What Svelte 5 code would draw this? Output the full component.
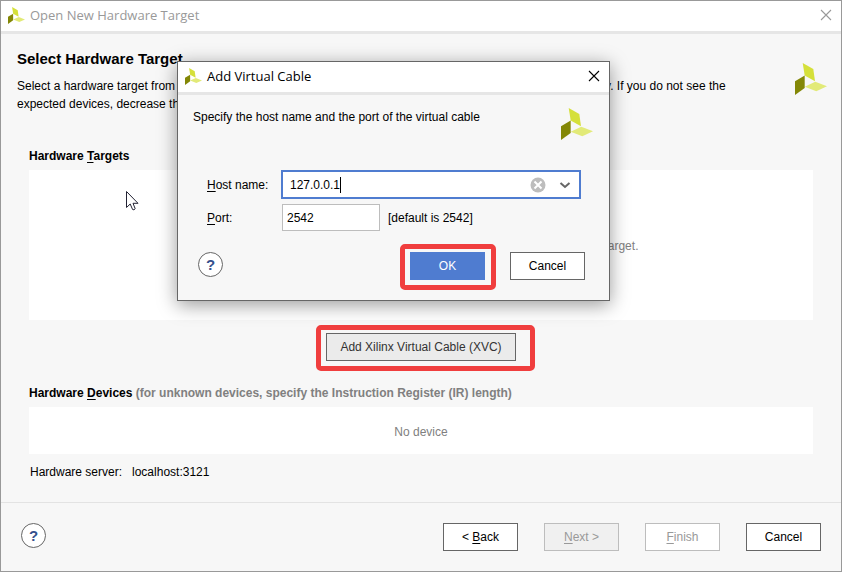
<script lang="ts">
  let hostName = $state('127.0.0.1');
  let port = $state('2542');
  let dialogOpen = $state(true);

  function closeDialog() {
    dialogOpen = false;
  }
</script>

{#snippet logo(size: number)}
  <svg class="logo" width={size} height={size} viewBox="0 0 32 32" aria-hidden="true">
    <path d="M7.700 0 18.300 6 20 18.300 9.700 12.500Z" fill="#d5e03a" />
    <path d="M0 18.300 9.700 12.500V25L0 32Z" fill="#838706" />
    <path d="M9.700 23.700 20.300 18.700 32 23.300 21.300 28.300Z" fill="#e2ea78" />
  </svg>
{/snippet}

{#snippet cross()}
  <svg width="12" height="12" viewBox="0 0 12 12" aria-hidden="true">
    <path d="M1 1 11 11M11 1 1 11" stroke="currentColor" stroke-width="1.1" fill="none" />
  </svg>
{/snippet}

<div class="window">
  <header class="titlebar inactive">
    {@render logo(17)}
    <span class="caption">Open New Hardware Target</span>
    <button class="close" aria-label="Close window">{@render cross()}</button>
  </header>

  <main class="page">
    <div class="intro">
      <div class="intro-text">
        <h1>Select Hardware Target</h1>
        <p>
          Select a hardware target from the list of available targets, then pick the appropriate JTAG clock (TCK)
          frequency. If you do not see the expected devices, decrease the frequency or select a different target.
        </p>
      </div>
      {@render logo(32)}
    </div>

    <section class="devices">
      <h2>Hardware <u>T</u>argets</h2>
      <div class="panel targets">
        No hardware target was connected. Add a virtual cable to open a hardware target.
      </div>
      <button class="btn wide marked" onclick={() => (dialogOpen = true)}>Add Xilinx Virtual Cable (XVC)</button>

      <h2>
        Hardware <u>D</u>evices
        <span class="note">(for unknown devices, specify the Instruction Register (IR) length)</span>
      </h2>
      <div class="panel">No device</div>
      <p class="server"><span>Hardware server:</span><span>localhost:3121</span></p>
    </section>
  </main>

  <footer class="footer">
    <button class="help" aria-label="Help">?</button>
    <div class="nav">
      <button class="btn">&lt; <u>B</u>ack</button>
      <button class="btn shaded" disabled><u>N</u>ext &gt;</button>
      <button class="btn" disabled><u>F</u>inish</button>
      <button class="btn">Cancel</button>
    </div>
  </footer>

  {#if dialogOpen}
    <div class="dialog" role="dialog" aria-labelledby="dialog-title">
      <header class="titlebar">
        {@render logo(17)}
        <span class="caption" id="dialog-title">Add Virtual Cable</span>
        <button class="close" aria-label="Close dialog" onclick={closeDialog}>{@render cross()}</button>
      </header>
      <div class="dialog-intro">
        <p>Specify the host name and the port of the virtual cable</p>
        {@render logo(32)}
      </div>
      <div class="form">
        <label for="host"><u>H</u>ost name:</label>
        <div class="combo">
          <input id="host" bind:value={hostName} />
          <span class="caret"></span>
          <button class="icon clear" aria-label="Clear" onclick={() => (hostName = '')}>
            <svg width="16" height="16" viewBox="0 0 16 16" aria-hidden="true">
              <circle cx="8" cy="8" r="7.500" fill="#bdbdbd" />
              <path d="M4.500 4.500 11.500 11.500M11.500 4.500 4.500 11.500" stroke="#fff" stroke-width="2" />
            </svg>
          </button>
          <button class="icon" aria-label="Show hosts">
            <svg width="12" height="12" viewBox="0 0 12 12" aria-hidden="true">
              <path d="M1.500 4 6 8 10.500 4" fill="none" stroke="#666" stroke-width="2" />
            </svg>
          </button>
        </div>
        <label for="port"><u>P</u>ort:</label>
        <div class="port-row">
          <input id="port" bind:value={port} />
          <span>[default is 2542]</span>
        </div>
      </div>
      <div class="dialog-actions">
        <button class="help" aria-label="Dialog help">?</button>
        <div class="choices">
          <button class="btn primary marked" onclick={closeDialog}>OK</button>
          <button class="btn" onclick={closeDialog}>Cancel</button>
        </div>
      </div>
    </div>
  {/if}

  <svg class="pointer" width="13" height="21" viewBox="0 0 13 21" aria-hidden="true">
    <path
      d="M.5.500V16.500L4.200 13 6.600 18.500Q8 19.500 9.200 17.700L7 12.300H12Z"
      fill="#fff"
      stroke="#223"
    />
  </svg>
</div>

<style>
  :global(body) {
    margin: 0;
  }

  .window {
    position: relative;
    box-sizing: border-box;
    display: flex;
    flex-direction: column;
    min-height: 100vh;
    border: 1px solid #999;
    background: #f7f7f7;
    color: #000;
    font: 12px/18px 'Liberation Sans', Arial, sans-serif;
  }

  h1,
  h2,
  p {
    margin: 0;
  }

  button,
  input {
    font: inherit;
    color: inherit;
  }

  u {
    text-underline-offset: 2px;
  }

  .logo {
    flex: none;
  }

  .titlebar {
    display: flex;
    align-items: center;
    height: 30px;
    padding: 0 8px 0 7px;
    border-bottom: 3px solid #e6e6e6;
    background: #fff;
    font: 13px/20px 'Open Sans', 'Noto Sans', sans-serif;
  }

  .titlebar .logo {
    margin-bottom: 2px;
  }

  .caption {
    flex: 1;
    margin: 0 0 2px 5px;
  }

  .inactive {
    color: #999;
  }

  .close {
    display: flex;
    padding: 0 1px 2px;
    border: 0;
    background: none;
  }

  .page {
    flex: 1;
  }

  .intro {
    display: flex;
    justify-content: space-between;
    padding: 16px 14px 0 16px;
  }

  .intro-text {
    max-width: 730px;
  }

  .intro .logo {
    margin-top: 13px;
  }

  h1 {
    margin-bottom: 9px;
    font-size: 15px;
    line-height: 18px;
  }

  .devices {
    padding: 34px 28px 0;
  }

  h2 {
    margin-bottom: 5px;
    font-size: 12px;
    line-height: 18px;
  }

  .note {
    color: #808080;
  }

  .panel {
    display: flex;
    align-items: center;
    justify-content: center;
    box-sizing: border-box;
    min-height: 47px;
    padding-top: 2px;
    background: #fff;
    color: #808080;
  }

  .targets {
    min-height: 150px;
  }

  .btn {
    position: relative;
    box-sizing: border-box;
    min-width: 75px;
    height: 28px;
    padding: 0 8px;
    border: 1px solid #666;
    background: #fff;
  }

  .btn:disabled {
    border-color: #bdbdbd;
    color: #999;
  }

  .btn.shaded {
    background: #f0f0f0;
  }

  .btn.wide {
    display: block;
    margin: 13px auto 23px;
    padding: 0 13px;
    background: #ebebeb;
    color: #333;
  }

  .btn.primary {
    border-color: #4f7cd0;
    background: #4f7cd0;
    color: #fff;
  }

  /* highlight frame around the buttons to press */
  .marked::after {
    content: '';
    position: absolute;
    inset: -9px -12px -11px -11px;
    border: 5px solid #f03e3e;
    border-radius: 5px;
    pointer-events: none;
  }

  .wide.marked::after {
    right: -20px;
  }

  .server {
    display: flex;
    gap: 10px;
    padding: 9px 1px;
  }

  .footer {
    display: flex;
    justify-content: space-between;
    padding: 20px;
    border-top: 1px solid #e3e3e3;
  }

  .help {
    box-sizing: border-box;
    width: 25px;
    height: 25px;
    padding: 0;
    border: 1px solid #666;
    border-radius: 50%;
    background: #fff;
    color: #34508c;
    font-size: 15px;
    font-weight: bold;
  }

  .nav {
    display: flex;
    gap: 26px;
  }

  .dialog {
    position: absolute;
    top: 60px;
    left: 176px;
    box-sizing: border-box;
    width: 433px;
    border: 1px solid #666;
    background: #f7f7f7;
    box-shadow: 0 4px 18px rgba(0, 0, 0, 0.4);
  }

  .dialog-intro {
    display: flex;
    justify-content: space-between;
    padding: 13px 16px 0 15px;
  }

  .form {
    display: grid;
    grid-template-columns: 74px 1fr;
    align-items: center;
    row-gap: 5px;
    padding: 30px 28px 0 29px;
  }

  .combo {
    display: flex;
    align-items: center;
    box-sizing: border-box;
    height: 29px;
    padding: 0 8px 0 7px;
    border: 2px solid #4f7cd0;
    background: #fff;
  }

  .combo input {
    field-sizing: content;
    max-width: 200px;
    padding: 0;
    border: 0;
    outline: 0;
    background: none;
  }

  .caret {
    width: 1px;
    height: 16px;
    background: #000;
  }

  .icon {
    display: flex;
    padding: 0;
    border: 0;
    background: none;
  }

  .clear {
    margin: 0 13px 0 auto;
  }

  .port-row {
    display: flex;
    align-items: center;
    gap: 8px;
    padding-left: 1px;
  }

  .port-row input {
    box-sizing: border-box;
    width: 98px;
    height: 27px;
    padding: 0 4px;
    border: 1px solid #bdbdbd;
    background: #fff;
  }

  .dialog-actions {
    display: flex;
    justify-content: space-between;
    padding: 21px 24px 20px 20px;
  }

  .choices {
    display: flex;
    gap: 25px;
  }

  .pointer {
    position: absolute;
    top: 190px;
    left: 125px;
  }
</style>
